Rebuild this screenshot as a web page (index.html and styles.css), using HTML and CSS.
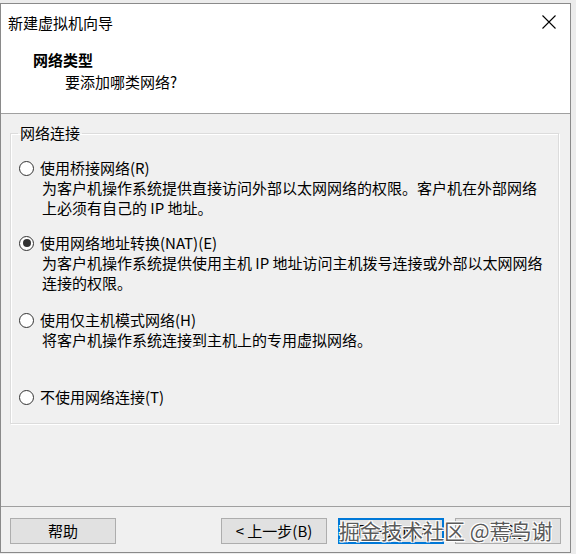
FILE: index.html
```html
<!DOCTYPE html>
<html lang="zh-CN">
<head>
<meta charset="utf-8">
<title>新建虚拟机向导</title>
<link rel="stylesheet" href="styles.css">
</head>
<body>
<div class="window">
  <div class="titlebar">
    <span class="title">新建虚拟机向导</span>
    <svg class="close" width="14" height="14" viewBox="0 0 14 14"><path d="M0.5 0.5 L13.5 13.5 M13.5 0.5 L0.5 13.5" stroke="#000" stroke-width="1.1" fill="none"/></svg>
  </div>
  <div class="header">
    <div class="h-title">网络类型</div>
    <div class="h-sub">要添加哪类网络?</div>
  </div>
  <div class="content">
    <fieldset class="group">
      <legend class="legend">网络连接</legend>
      <div class="option opt1">
        <div class="opt-row"><span class="radio"></span><span class="opt-label">使用桥接网络(R)</span></div>
        <div class="desc">为客户机操作系统提供直接访问外部以太网网络的权限。客户机在外部网络<br>上必须有自己的 IP 地址。</div>
      </div>
      <div class="option opt2">
        <div class="opt-row"><span class="radio checked"></span><span class="opt-label">使用网络地址转换(NAT)(E)</span></div>
        <div class="desc">为客户机操作系统提供使用主机 IP 地址访问主机拨号连接或外部以太网网络<br>连接的权限。</div>
      </div>
      <div class="option opt3">
        <div class="opt-row"><span class="radio"></span><span class="opt-label">使用仅主机模式网络(H)</span></div>
        <div class="desc">将客户机操作系统连接到主机上的专用虚拟网络。</div>
      </div>
      <div class="option opt4">
        <div class="opt-row"><span class="radio"></span><span class="opt-label">不使用网络连接(T)</span></div>
      </div>
    </fieldset>
  </div>
  <div class="footer">
    <button class="btn">帮助</button>
    <div class="spacer"></div>
    <button class="btn">&lt;&nbsp;上一步(B)</button>
    <button class="btn default">下一步(N)&nbsp;&gt;</button>
    <button class="btn">取消</button>
  </div>
  <div class="watermark">掘金技术社区 @蔫鸟谢</div>
</div>
</body>
</html>
```
FILE: styles.css
```css
html, body {
  margin: 0;
  padding: 0;
}
body {
  background: #ececec;
  font-family: "Noto Sans CJK SC", "Microsoft YaHei", sans-serif;
  font-size: 15px;
  color: #000;
  width: 576px;
  height: 554px;
  overflow: hidden;
}
.window {
  position: relative;
  margin-top: 3px;
  width: 569px;
  height: 548px;
  border: 1px solid #8a8a8a;
  background: #f0f0f0;
  display: flex;
  flex-direction: column;
}
.titlebar {
  height: 38px;
  background: #fff;
  display: flex;
  align-items: center;
  padding-left: 7px;
  padding-right: 14px;
}
.title {
  flex: 1;
  line-height: 20px;
  font-size: 15px;
}
.close {
  display: block;
  margin-top: -2px;
}
.header {
  height: 71px;
  background: #fff;
  border-bottom: 1px solid #a0a0a0;
  box-sizing: content-box;
}
.h-title {
  margin-top: 8px;
  padding-left: 32px;
  font-weight: bold;
  line-height: 20px;
}
.h-sub {
  margin-top: 2px;
  padding-left: 64px;
  line-height: 20px;
}
.content {
  flex: 1;
  padding-top: 9px;
}
.group {
  margin: 0 11px 0 9px;
  padding: 0 0 16px 8px;
  border: 1px solid #dcdcdc;
  box-shadow: inset 1px 1px 0 #fff, 1px 1px 0 #fff;
  min-width: 0;
}
.legend {
  padding: 0 2px;
  margin-left: -1px;
  line-height: 20px;
}
.option {
  display: flex;
  flex-direction: column;
}
.opt1 { margin-top: 15px; }
.opt2 { margin-top: 15px; }
.opt3 { margin-top: 17px; }
.opt4 { margin-top: 37px; }
.opt-row {
  display: flex;
  align-items: center;
  height: 20px;
}
.radio {
  width: 15px;
  height: 15px;
  box-sizing: border-box;
  border: 1px solid #333;
  border-radius: 50%;
  background: #fff;
  display: flex;
  align-items: center;
  justify-content: center;
  margin-right: 6px;
  flex: none;
}
.radio.checked::after {
  content: "";
  width: 8px;
  height: 8px;
  border-radius: 50%;
  background: #333;
}
.opt-label {
  line-height: 20px;
}
.desc {
  padding-left: 23px;
  line-height: 20px;
}
.footer {
  border-top: 1px solid #a0a0a0;
  display: flex;
  align-items: flex-start;
  padding: 11px 9px 0 9px;
  gap: 11px;
  box-sizing: border-box;
  height: 46px;
}
.spacer {
  flex: 1;
}
.btn {
  width: 106px;
  height: 26px;
  box-sizing: border-box;
  border: 1px solid #adadad;
  background: #e1e1e1;
  font-family: "Noto Sans CJK SC", sans-serif;
  font-size: 15px;
  color: #000;
  padding: 0;
  line-height: 22px;
}
.btn.default {
  border-color: #0078d7;
  box-shadow: inset 0 0 0 1px #0078d7;
}
.watermark {
  position: absolute;
  left: 338px;
  top: 511px;
  font-size: 21px;
  line-height: 30px;
  color: #5a5a5a;
  white-space: nowrap;
  text-shadow: 1px 1px 0 #fff, -1px -1px 0 #fff, 1px -1px 0 #fff, -1px 1px 0 #fff;
}
```
